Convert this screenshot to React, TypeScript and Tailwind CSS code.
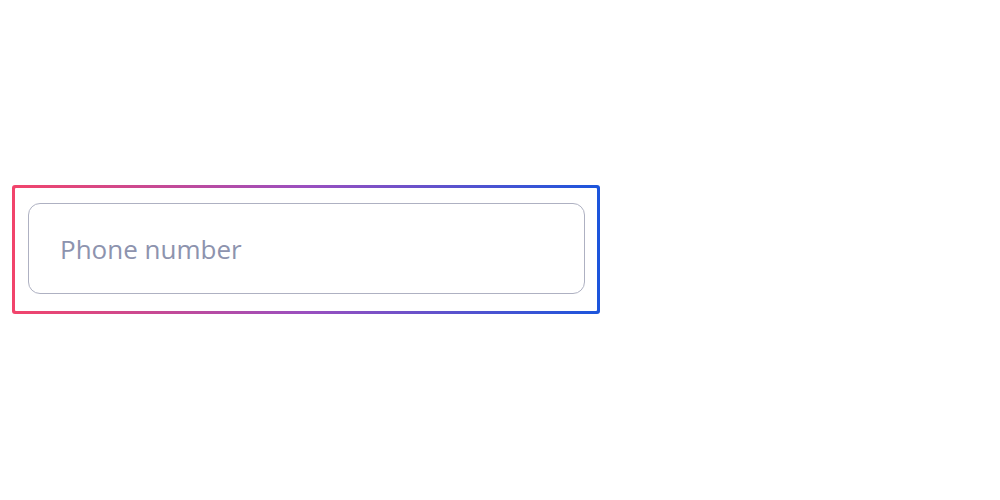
import React from "react";

export default function App() {
  return (
    <div className="w-[1000px] h-[500px] bg-white flex items-center pl-[12px] pb-[1px]">
      <div className="w-[588px] h-[129px] rounded-[3px] p-[3px] bg-[linear-gradient(to_right,#f2446b,#9a4fbf,#1b55dc)]">
        <div className="w-full h-full bg-white rounded-[1px] pl-[13px] pr-[12px] pt-[15px] pb-[17px]">
          <input
            type="text"
            placeholder="Phone number"
            className="w-full h-full rounded-[12px] border border-[#aeb1c2] bg-white pl-[31px] text-[26px] text-[#8d93ae] placeholder:text-[#8d93ae] outline-none"
            style={{ fontFamily: '"Open Sans", sans-serif' }}
          />
        </div>
      </div>
    </div>
  );
}
